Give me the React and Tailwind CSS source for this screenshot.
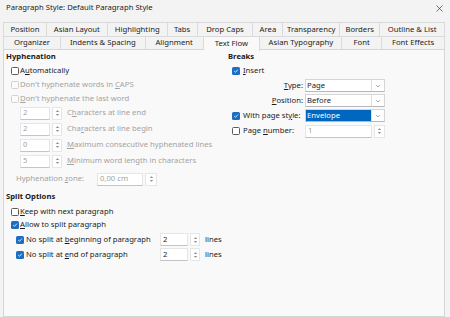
import React from 'react';

const U = ({ children }) => <span className="underline underline-offset-[1px]">{children}</span>;

function Box({ checked, disabled }) {
  if (checked) {
    return (
      <span className="w-[8px] h-[8px] rounded-[1.5px] bg-[#1b6ec2] flex items-center justify-center shrink-0">
        <svg width="6" height="6" viewBox="0 0 6 6">
          <path d="M1.2 3.1 L2.5 4.3 L4.9 1.6" fill="none" stroke="#fff" strokeWidth="0.8" />
        </svg>
      </span>
    );
  }
  return (
    <span
      className={
        disabled
          ? 'w-[8px] h-[8px] rounded-[1.5px] border border-[#d2d2d2] bg-[#fbfbfb] shrink-0'
          : 'w-[8px] h-[8px] rounded-[1.5px] border border-[#5c5c5c] bg-white shrink-0'
      }
    />
  );
}

function Arrows() {
  return (
    <svg width="5" height="8" viewBox="0 0 5 8">
      <path d="M2.5 1.2 L4.2 3 L0.8 3 Z" fill="#8c8c8c" />
      <path d="M0.8 5 L4.2 5 L2.5 6.8 Z" fill="#8c8c8c" />
    </svg>
  );
}

function Spin({ value, inputCls, btnCls, disabled }) {
  return (
    <div className="flex h-[13px] shrink-0">
      <div
        className={`${inputCls} bg-white border border-[#e6e6e6] border-b-[#c4c4c4] flex items-center pl-[2px] ${
          disabled ? 'text-[#a3a3a3]' : 'text-[#1b1b1b]'
        }`}
      >
        {value}
      </div>
      <div className={`${btnCls} ml-[2px] bg-white border border-[#e6e6e6] flex items-center justify-center`}>
        <Arrows />
      </div>
    </div>
  );
}

function Chevron() {
  return (
    <svg width="6" height="4" viewBox="0 0 6 4">
      <path d="M0.8 0.9 L3 3 L5.2 0.9" fill="none" stroke="#7a7a7a" strokeWidth="0.6" />
    </svg>
  );
}

function Combo({ value, selected }) {
  return (
    <div className="flex w-[80px] h-[13px] bg-white border border-[#d6d6d6] border-b-[#b8b8b8]">
      <div
        className={
          selected
            ? 'flex-1 flex items-center pl-[1px] bg-[#0067c0] text-white'
            : 'flex-1 flex items-center pl-[1px] text-[#1b1b1b]'
        }
      >
        {value}
      </div>
      <div className="w-[13px] border-l border-[#e0e0e0] flex items-center justify-center">
        <Chevron />
      </div>
    </div>
  );
}

const row1 = [
  ['Position', 'w-[43px]'],
  ['Asian Layout', 'w-[61px]'],
  ['Highlighting', 'w-[60px]'],
  ['Tabs', 'w-[30px]'],
  ['Drop Caps', 'w-[56px]'],
  ['Area', 'w-[30px]'],
  ['Transparency', 'w-[57px]'],
  ['Borders', 'w-[40px]'],
  ['Outline & List', 'w-[65px]'],
];

const row2 = [
  ['Organizer', 'w-[57px]'],
  ['Indents & Spacing', 'w-[85px]'],
  ['Alignment', 'w-[58px]'],
  ['Text Flow', 'w-[57px]'],
  ['Asian Typography', 'w-[82px]'],
  ['Font', 'w-[40px]'],
  ['Font Effects', 'w-[63px]'],
];

const hyphSpins = [
  ['2', <>C<U>h</U>aracters at line end</>],
  ['2', <>Cha<U>r</U>acters at line begin</>],
  ['0', <><U>M</U>aximum consecutive hyphenated lines</>],
  ['5', <><U>M</U>inimum word length in characters</>],
];

export default function App() {
  return (
    <div className="w-[450px] h-[317px] overflow-hidden bg-[#f3f3f3] text-[#1b1b1b] text-[7.7px] leading-none font-['Noto_Sans',sans-serif] flex flex-col">
      {/* title bar */}
      <div className="h-[22px] flex items-start justify-between pl-[6px] pr-[7px] pt-[4px] shrink-0">
        <span>Paragraph Style: Default Paragraph Style</span>
        <svg width="7" height="7" viewBox="0 0 7 7" className="mt-[1px]">
          <path d="M0.5 0.5 L6.5 6.5 M6.5 0.5 L0.5 6.5" stroke="#3a3a3a" strokeWidth="0.7" />
        </svg>
      </div>

      <div className="flex-1 flex flex-col pl-[3px] pr-[5px]">
        {/* tab rows */}
        <div className="flex h-[14px] border-t border-l border-[#dadada] bg-[#f3f3f3]">
          {row1.map(([t, w]) => (
            <div key={t} className={`${w} h-full border-r border-[#dadada] flex items-center justify-center`}>
              {t}
            </div>
          ))}
        </div>
        <div className="flex h-[13px] border-t border-l border-[#dadada] bg-[#f3f3f3]">
          {row2.map(([t, w]) =>
            t === 'Text Flow' ? (
              <div key={t} className={`${w} h-[14px] relative z-10 bg-[#f9f9f9] border-r border-[#dadada] flex items-center justify-center pb-[1px]`}>
                {t}
              </div>
            ) : (
              <div key={t} className={`${w} h-full border-r border-[#dadada] flex items-center justify-center`}>
                {t}
              </div>
            )
          )}
        </div>

        {/* panel */}
        <div className="flex-1 bg-[#f9f9f9] border border-[#d6d6d6] flex">
          {/* left column */}
          <div className="w-[224px] flex flex-col pl-[2px]">
            <div className="h-[14px] flex items-center font-bold">Hyphenation</div>
            <div className="h-[14px] flex items-center pl-[5px] gap-[1px]">
              <Box />
              <span>A<U>u</U>tomatically</span>
            </div>
            <div className="h-[14px] flex items-center pl-[5px] gap-[1px] text-[#a3a3a3]">
              <Box disabled />
              <span>Don't hyphenate words in <U>C</U>APS</span>
            </div>
            <div className="h-[13px] flex items-center pl-[5px] gap-[1px] text-[#a3a3a3]">
              <Box disabled />
              <span><U>D</U>on't hyphenate the last word</span>
            </div>
            {hyphSpins.map(([v, label], i) => (
              <div key={i} className="h-[16px] flex items-center pl-[14px]">
                <Spin value={v} inputCls="w-[30px]" btnCls="w-[10px]" disabled />
                <span className="ml-[5px] text-[#a3a3a3]">{label}</span>
              </div>
            ))}
            <div className="h-[20px] flex items-center pl-[10px]">
              <span className="w-[81px] text-[#a3a3a3]">Hyphenation <U>z</U>one:</span>
              <Spin value="0,00 cm" inputCls="w-[46px]" btnCls="w-[12px]" disabled />
            </div>
            <div className="h-[16px] flex items-center font-bold">Split Options</div>
            <div className="h-[13px] flex items-center pl-[5px] gap-[1px]">
              <Box />
              <span><U>K</U>eep with next paragraph</span>
            </div>
            <div className="h-[14px] flex items-center pl-[5px] gap-[1px]">
              <Box checked />
              <span><U>A</U>llow to split paragraph</span>
            </div>
            <div className="h-[15px] flex items-center pl-[10px]">
              <Box checked />
              <span className="w-[134px] ml-[2px]">No split at <U>b</U>eginning of paragraph</span>
              <Spin value="2" inputCls="w-[28px]" btnCls="w-[10px]" />
              <span className="ml-[5px]">lines</span>
            </div>
            <div className="h-[15px] flex items-center pl-[10px]">
              <Box checked />
              <span className="w-[134px] ml-[2px]">No split at <U>e</U>nd of paragraph</span>
              <Spin value="2" inputCls="w-[28px]" btnCls="w-[10px]" />
              <span className="ml-[5px]">lines</span>
            </div>
          </div>

          {/* right column */}
          <div className="flex-1 flex flex-col">
            <div className="h-[14px] flex items-center font-bold">Breaks</div>
            <div className="h-[14px] flex items-center pl-[4px] gap-[3px]">
              <Box checked />
              <span><U>I</U>nsert</span>
            </div>
            <div className="h-[15px] flex items-center">
              <span className="w-[77px] text-right pr-[2px]"><U>T</U>ype:</span>
              <Combo value="Page" />
            </div>
            <div className="h-[15px] flex items-center">
              <span className="w-[77px] text-right pr-[2px]"><U>P</U>osition:</span>
              <Combo value="Before" />
            </div>
            <div className="h-[15px] flex items-center">
              <div className="w-[77px] flex items-center pl-[4px] gap-[3px]">
                <Box checked />
                <span>With page st<U>y</U>le:</span>
              </div>
              <Combo value="Envelope" selected />
            </div>
            <div className="h-[16px] flex items-center">
              <div className="w-[77px] flex items-center pl-[4px] gap-[3px]">
                <Box />
                <span>Page <U>n</U>umber:</span>
              </div>
              <Spin value="1" inputCls="w-[67px]" btnCls="w-[11px]" disabled />
            </div>
          </div>
        </div>
      </div>
    </div>
  );
}
